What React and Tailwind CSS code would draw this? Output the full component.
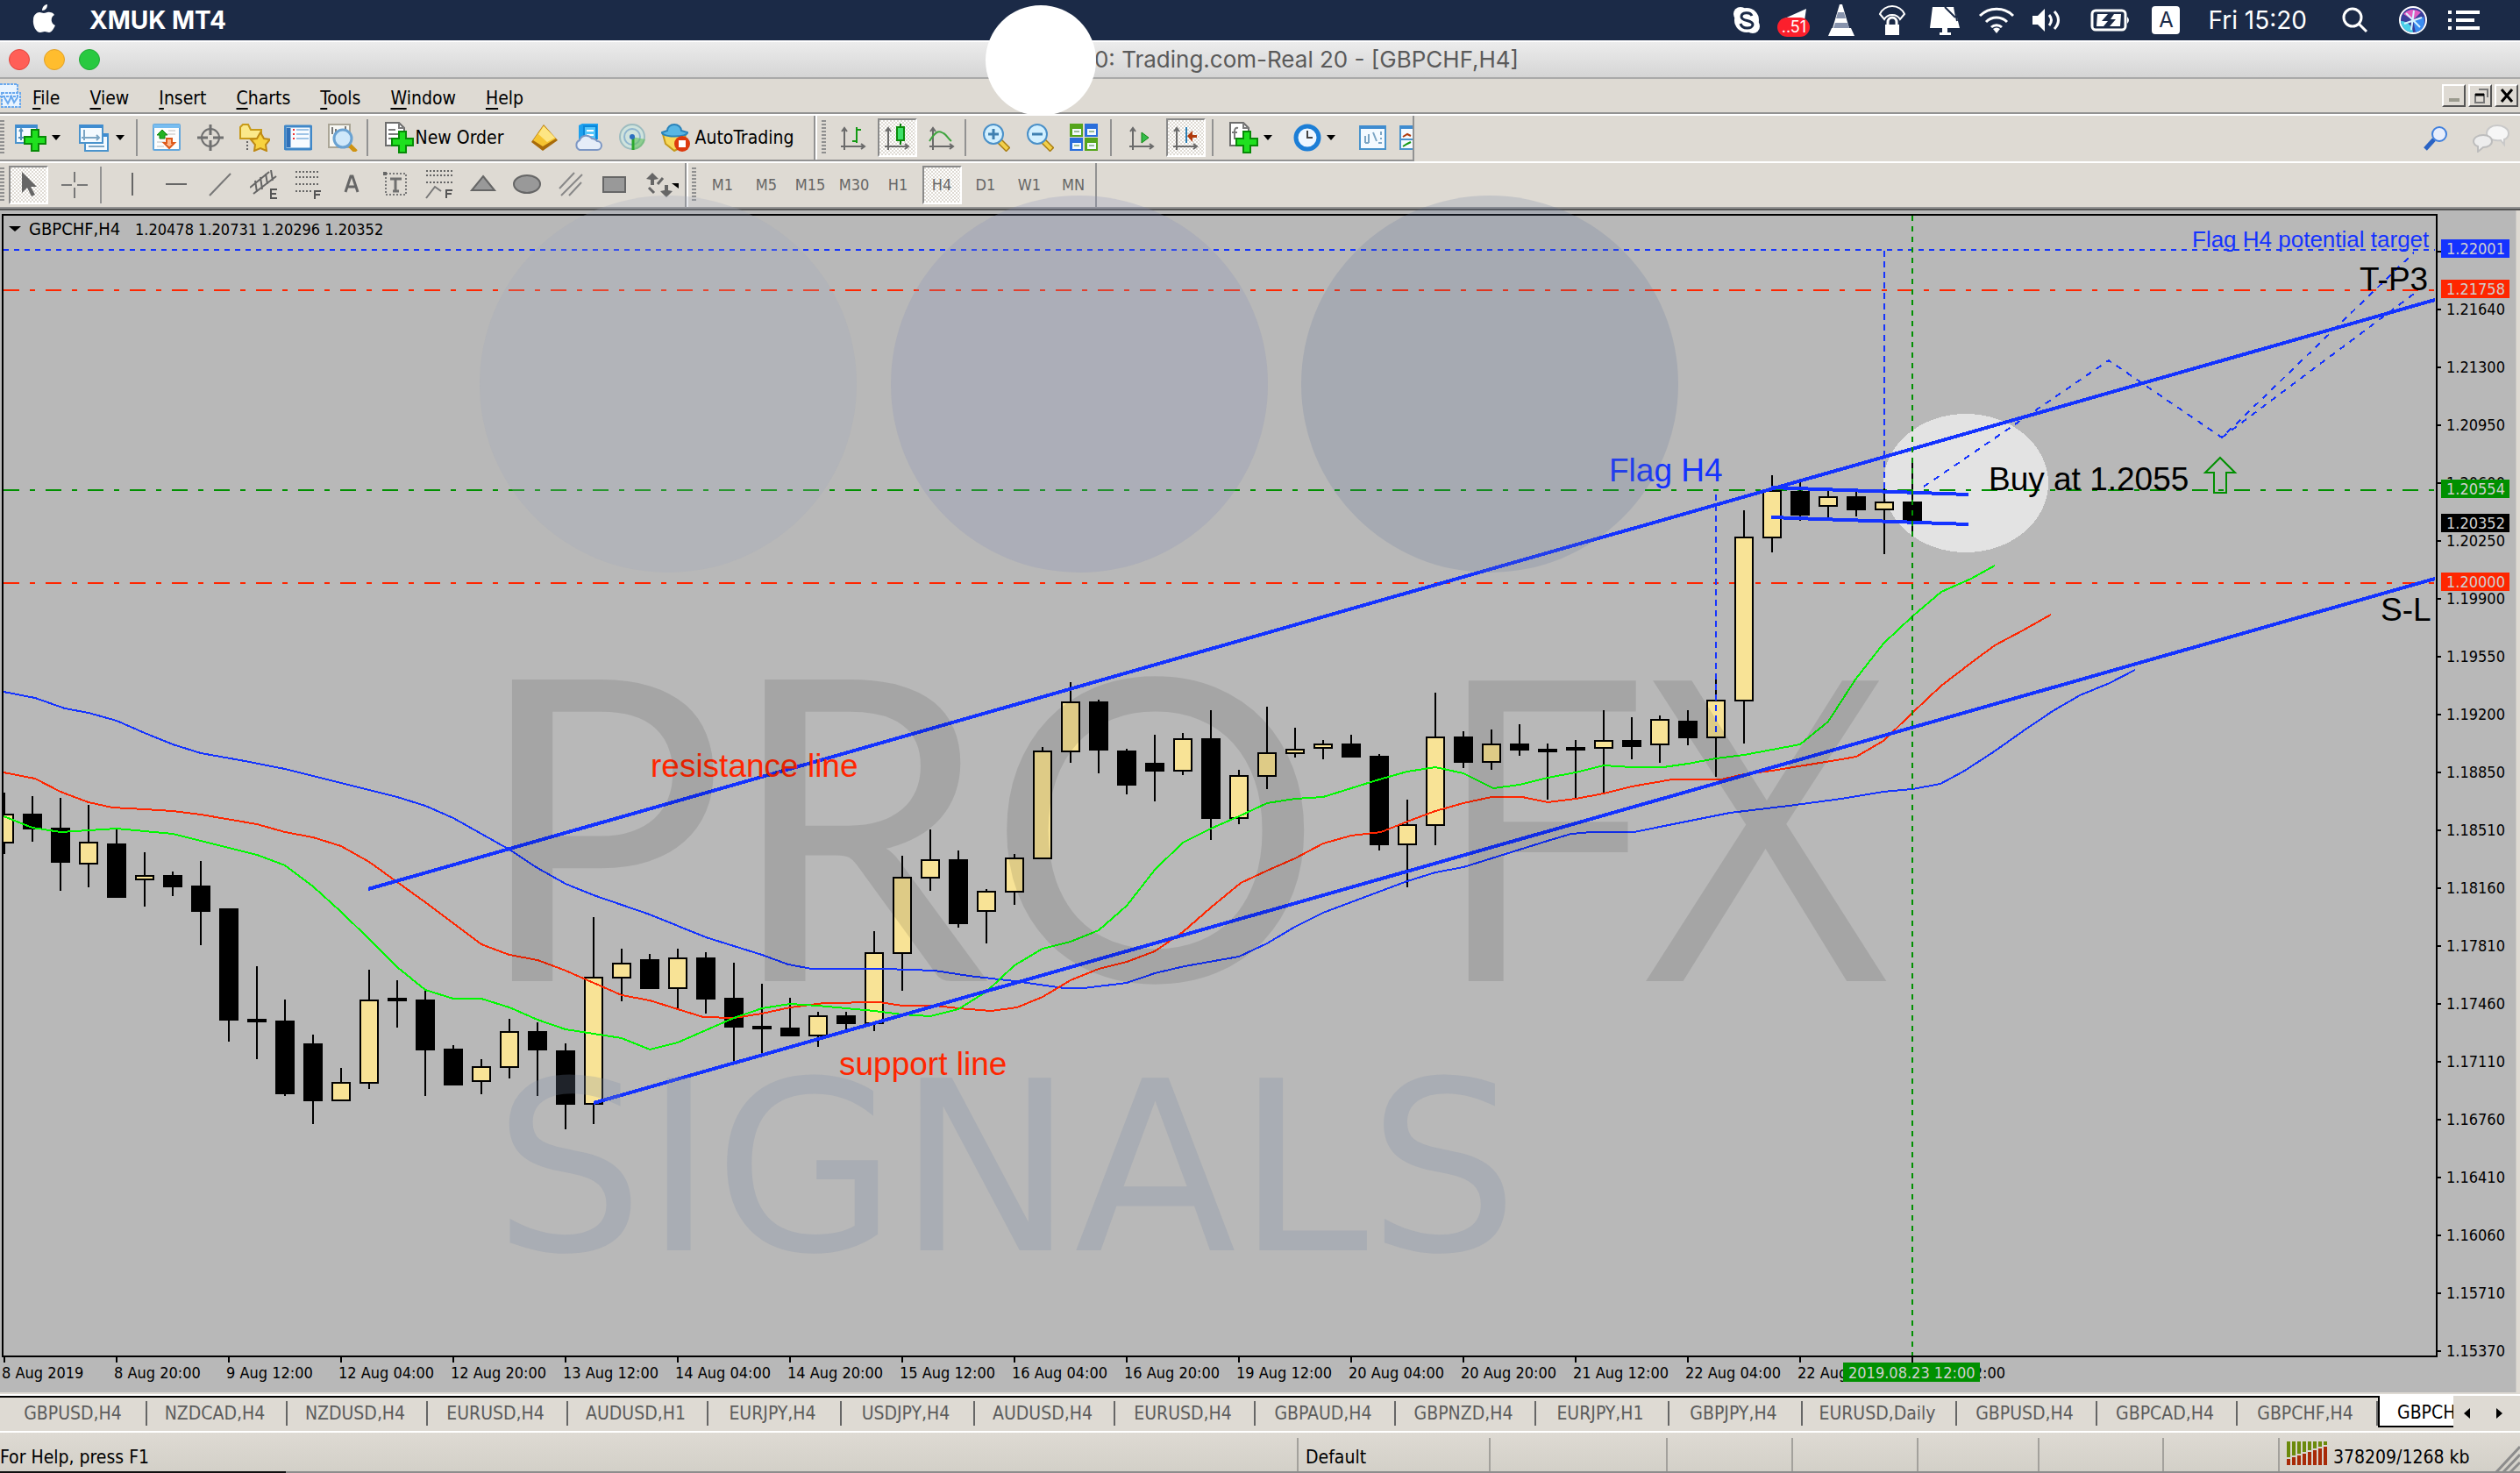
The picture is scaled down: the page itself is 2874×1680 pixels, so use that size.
const UP = "up";
const DOWN = "down";

// [high, top, bottom, low, direction]
const candles = [
    [904, 928, 962, 974, UP],
    [908, 928, 946, 960, DOWN],
    [910, 944, 984, 1016, DOWN],
    [918, 960, 986, 1012, UP],
    [946, 962, 1024, 1024, DOWN],
    [972, 998, 1004, 1034, UP],
    [994, 998, 1012, 1022, DOWN],
    [982, 1010, 1040, 1078, DOWN],
    [1036, 1036, 1164, 1188, DOWN],
    [1102, 1162, 1166, 1208, DOWN],
    [1140, 1164, 1248, 1250, DOWN],
    [1180, 1190, 1256, 1282, DOWN],
    [1218, 1234, 1256, 1256, UP],
    [1106, 1140, 1236, 1242, UP],
    [1118, 1138, 1142, 1172, DOWN],
    [1130, 1140, 1198, 1250, DOWN],
    [1192, 1196, 1238, 1238, DOWN],
    [1208, 1216, 1234, 1248, UP],
    [1162, 1176, 1218, 1230, UP],
    [1166, 1176, 1198, 1250, DOWN],
    [1190, 1198, 1260, 1288, DOWN],
    [1046, 1114, 1260, 1282, UP],
    [1082, 1098, 1116, 1142, UP],
    [1088, 1094, 1128, 1128, DOWN],
    [1082, 1092, 1128, 1150, UP],
    [1086, 1092, 1140, 1156, DOWN],
    [1098, 1138, 1172, 1210, DOWN],
    [1122, 1170, 1174, 1202, DOWN],
    [1138, 1172, 1182, 1182, DOWN],
    [1154, 1158, 1182, 1194, UP],
    [1154, 1158, 1168, 1174, DOWN],
    [1062, 1086, 1168, 1176, UP],
    [976, 1000, 1088, 1130, UP],
    [946, 980, 1002, 1016, UP],
    [970, 980, 1054, 1058, DOWN],
    [1014, 1016, 1040, 1076, UP],
    [974, 978, 1018, 1032, UP],
    [852, 856, 980, 980, UP],
    [778, 800, 858, 870, UP],
    [798, 800, 856, 882, DOWN],
    [854, 856, 896, 906, DOWN],
    [838, 870, 880, 914, DOWN],
    [836, 842, 880, 884, UP],
    [810, 842, 934, 958, DOWN],
    [878, 884, 934, 940, UP],
    [806, 858, 886, 900, UP],
    [830, 854, 860, 864, UP],
    [844, 848, 854, 866, UP],
    [838, 848, 864, 864, DOWN],
    [860, 862, 964, 970, DOWN],
    [912, 940, 964, 1012, UP],
    [790, 840, 942, 964, UP],
    [834, 840, 870, 876, DOWN],
    [832, 848, 870, 878, UP],
    [826, 848, 856, 862, DOWN],
    [848, 854, 858, 912, DOWN],
    [844, 852, 856, 912, DOWN],
    [810, 844, 854, 904, UP],
    [818, 844, 852, 866, DOWN],
    [816, 820, 850, 870, UP],
    [810, 822, 842, 850, DOWN],
    [772, 798, 842, 886, UP],
    [582, 612, 800, 848, UP],
    [542, 559, 614, 630, UP],
    [550, 560, 588, 594, DOWN],
    [556, 566, 578, 590, UP],
    [561, 566, 582, 589, DOWN],
    [557, 572, 582, 632, UP],
    [528, 572, 594, 607, DOWN],
];

const fastAverage =
    "4,931 37,944 69,949 101,947 133,945 165,948 197,951 229,959 261,967 293,975 325,987 357,1011 389,1040 421,1071 453,1103 485,1129 517,1139 549,1139 581,1149 613,1163 645,1174 677,1179 709,1184 741,1197 773,1189 805,1175 837,1161 869,1150 901,1145 933,1147 965,1150 997,1153 1029,1157 1061,1159 1093,1151 1125,1131 1157,1101 1189,1082 1221,1074 1253,1061 1285,1033 1317,992 1349,961 1381,945 1413,931 1445,916 1477,911 1509,909 1541,899 1573,889 1605,880 1637,875 1669,882 1703,899 1733,895 1765,887 1797,881 1829,873 1861,875 1897,875 1925,871 1957,865 1989,861 2021,855 2053,849 2085,823 2116,775 2148,734 2181,703 2214,675 2248,660 2275,645";
const midAverage =
    "4,881 40,888 69,903 101,915 128,921 165,923 197,925 229,929 293,940 325,949 357,955 389,965 421,983 453,1006 485,1029 517,1053 549,1077 581,1089 613,1095 645,1107 677,1121 709,1135 741,1141 773,1151 802,1160 837,1161 869,1156 901,1149 940,1144 1003,1143 1029,1147 1067,1147 1093,1150 1130,1153 1160,1149 1189,1137 1221,1118 1253,1105 1285,1097 1317,1085 1349,1063 1381,1035 1415,1007 1445,993 1477,979 1509,962 1541,953 1575,949 1605,937 1637,925 1669,916 1701,909 1736,909 1765,915 1797,911 1829,905 1861,897 1907,889 1963,889 1989,883 2021,879 2100,866 2117,863 2148,845 2181,813 2214,782 2248,756 2275,736 2307,719 2339,701";
const slowAverage =
    "4,789 40,796 74,808 101,813 133,822 165,836 197,849 229,859 274,867 325,877 389,893 453,909 485,919 517,933 549,951 581,969 613,990 645,1008 677,1021 709,1032 741,1043 773,1056 805,1069 837,1079 869,1089 899,1100 926,1105 1008,1105 1066,1107 1105,1113 1157,1119 1214,1127 1236,1127 1285,1121 1317,1110 1351,1102 1413,1091 1445,1076 1477,1057 1509,1041 1541,1029 1573,1017 1605,1005 1637,995 1669,989 1701,979 1733,969 1765,959 1792,951 1815,949 1864,949 1893,943 1973,927 2040,919 2100,911 2148,903 2181,900 2213,894 2239,880 2273,858 2307,834 2341,811 2372,793 2406,779 2435,764";

const prices = [
    "1.21640", "1.21300", "1.20950", "1.20600", "1.20250", "1.19900", "1.19550", "1.19200", "1.18850", "1.18510",
    "1.18160", "1.17810", "1.17460", "1.17110", "1.16760", "1.16410", "1.16060", "1.15710", "1.15370",
];

const priceTags = [
    { y: 273, value: "1.22001", className: "fill-[#1433ff]" },
    { y: 319, value: "1.21758", className: "fill-[#ff2600]" },
    { y: 547, value: "1.20554", className: "fill-[#009000]" },
    { y: 586, value: "1.20352", className: "fill-black" },
    { y: 653, value: "1.20000", className: "fill-[#ff2600]" },
];

const dates = [
    "8 Aug 2019", "8 Aug 20:00", "9 Aug 12:00", "12 Aug 04:00", "12 Aug 20:00", "13 Aug 12:00", "14 Aug 04:00",
    "14 Aug 20:00", "15 Aug 12:00", "16 Aug 04:00", "16 Aug 20:00", "19 Aug 12:00", "20 Aug 04:00", "20 Aug 20:00",
    "21 Aug 12:00", "22 Aug 04:00", "22 Aug 20:00", "23 Aug 12:00",
];

const chartTabs = [
    ["GBPUSD,H4", "w-[168px] pl-1"],
    ["NZDCAD,H4", "w-[160px]"],
    ["NZDUSD,H4", "w-[160px]"],
    ["EURUSD,H4", "w-[160px]"],
    ["AUDUSD,H1", "w-[160px]"],
    ["EURJPY,H4", "w-[152px]"],
    ["USDJPY,H4", "w-[152px]"],
    ["AUDUSD,H4", "w-[160px]"],
    ["EURUSD,H4", "w-[160px]"],
    ["GBPAUD,H4", "w-[160px]"],
    ["GBPNZD,H4", "w-[160px]"],
    ["EURJPY,H1", "w-[152px]"],
    ["GBPJPY,H4", "w-[152px]"],
    ["EURUSD,Daily", "w-[176px]"],
    ["GBPUSD,H4", "w-[160px]"],
    ["GBPCAD,H4", "w-[160px]"],
    ["GBPCHF,H4", "w-[160px]"],
];

const Svg = ({ w = 32, h = 32, children, className = "" }) => (
    <svg width={w} height={h} viewBox={`0 0 ${w} ${h}`} className={`shrink-0 ${className}`} fill="none" aria-hidden="true">
        {children}
    </svg>
);

const Plus = ({ x = 10, y = 7 }) => (
    <path
        d={`M${x + 8} ${y}h8v8h8v8h-8v8h-8v-8h-8v-8h8z`}
        fill="#1fe01f"
        stroke="#078a07"
        strokeWidth="2"
    />
);

const Axes = () => <path d="M6 6v24M2 26h26M3 9l3-4 3 4M25 23l4 3-4 3" stroke="#6b6b6b" strokeWidth="2" />;

const Lens = ({ minus }) => (
    <Svg>
        <path d="M20 20l10 10" stroke="#a87c10" strokeWidth="7" />
        <path d="M20 20l9 9" stroke="#f2cf4a" strokeWidth="4" />
        <circle cx="13" cy="12" r="11" fill="#d2f0ff" stroke="#4a90c8" strokeWidth="2" />
        <path d={minus ? "M7 12h12" : "M7 12h12M13 6v12"} stroke="#3f80b0" strokeWidth="3" />
    </Svg>
);

const Page = ({ x, y, w, h }) => (
    <g>
        <rect x={x} y={y} width={w} height={h} fill="#f4faff" stroke="#4a93cc" strokeWidth="2" />
        <path d={`M${x} ${y + 1}h${w}`} stroke="#3f8cd0" strokeWidth="4" />
    </g>
);

const Document = () => (
    <g>
        <path d="M2 1h15l6 6v20H2z" fill="#fff" stroke="#6d6d6d" strokeWidth="2" />
        <path d="M17 1v6h6M5 9h8M5 14h13M5 19h10" stroke="#7b7b7b" strokeWidth="2" />
    </g>
);

const icons = {
    newChart: (
        <Svg w={36}>
            <Page x={1} y={2} w={24} h={20} />
            <path d="M7 7v12M4 16h10M5 9l2-3 2 3" stroke="#5590b8" strokeWidth="2" />
            <Plus x={11} y={7} />
        </Svg>
    ),
    profiles: (
        <Svg w={36}>
            <Page x={7} y={12} w={26} h={19} />
            <Page x={1} y={2} w={26} h={20} />
            <path d="M6 7v12M3 16h20M20 13l3 3-3 3M11 26h18" stroke="#7ba5c4" strokeWidth="2" />
        </Svg>
    ),
    marketWatch: (
        <Svg>
            <rect x="1" y="1" width="30" height="29" rx="1" fill="#fdfdfd" stroke="#64a7dc" strokeWidth="2" />
            <path d="M1 3h30" stroke="#78bdf0" strokeWidth="4" />
            <path d="M15 12h11M5 21h9M18 8h8M5 26h8" stroke="#ddd" strokeWidth="2" />
            <path d="M11 7l6 6h-3v4H8v-4H5z" fill="#23b223" stroke="#118811" />
            <path d="M19 28l-6-6h3v-5h6v5h3z" fill="#ffb78c" stroke="#de5a1c" strokeWidth="2" />
        </Svg>
    ),
    crosshair: (
        <Svg>
            <circle cx="16" cy="16" r="10" stroke="#707070" strokeWidth="2" />
            <path d="M16 1v12M16 19v12M1 16h12M19 16h12" stroke="#707070" strokeWidth="3" />
        </Svg>
    ),
    navigator: (
        <Svg w={36}>
            <path d="M2 4l3-3h6l3 6h12v10H2z" fill="#fbe98b" stroke="#c89b1a" strokeWidth="2" />
            <path d="M10 20v12" stroke="#666" strokeWidth="2" strokeDasharray="2 2" />
            <path d="M25 10l4 7 7 1-5 6 1 7-7-3-7 3 1-7-5-6 7-1z" fill="#f8d33f" stroke="#bf8a14" strokeWidth="2" />
        </Svg>
    ),
    terminal: (
        <Svg>
            <rect x="1" y="3" width="30" height="26" rx="1" fill="#f7fbff" stroke="#3f87c8" strokeWidth="3" />
            <path d="M5 5v22" stroke="#2f70b8" strokeWidth="5" />
            <path d="M11 6v2M11 11v2M11 16v2" stroke="#e33" strokeWidth="2" />
            <path d="M14 7h14M14 12h14M14 17h14" stroke="#9fc4e6" strokeWidth="2" />
        </Svg>
    ),
    tester: (
        <Svg w={36}>
            <rect x="1" y="1" width="24" height="26" fill="#f8f8f4" stroke="#aaa596" strokeWidth="2" />
            <path d="M5 4v8M9 6v7M20 3v7" stroke="#777" strokeWidth="2" />
            <path d="M23 23l9 9" stroke="#cf9312" strokeWidth="5" />
            <circle cx="17" cy="17" r="10" fill="#cfe8fa" stroke="#6aa2d2" strokeWidth="3" />
        </Svg>
    ),
    newOrder: (
        <Svg w={34} h={36}>
            <Document />
            <Plus x={9} y={11} />
        </Svg>
    ),
    gold: (
        <Svg>
            <path d="M15 1L1 21l13 10L31 19z" fill="#a86b09" />
            <path d="M15 2L3 19l11 7 15-9z" fill="#f5c431" />
            <path d="M15 3L9 12l10 9 9-5z" fill="#fde583" />
        </Svg>
    ),
    cloud: (
        <Svg>
            <path d="M5 2l4-2h18v18H5z" fill="#1da0ee" />
            <path d="M11 3h14v15H11z" fill="#55c6fb" stroke="#0a86d8" strokeWidth="2" />
            <path d="M14 8h8M14 13h8" stroke="#fff" strokeWidth="2" />
            <path d="M6 30a6 6 0 010-11 8 8 0 0114-2 7 7 0 016 3 5 5 0 010 10z" fill="#e6edf8" stroke="#7d97c4" strokeWidth="2" />
        </Svg>
    ),
    signals: (
        <Svg>
            <circle cx="16" cy="15" r="14" fill="#cfe3dd" stroke="#9dbcc0" strokeWidth="2" />
            <circle cx="16" cy="15" r="9" stroke="#8fb5cf" strokeWidth="2" />
            <path d="M16 15l2 15a15 15 0 0013-12z" fill="#62c05c" opacity=".6" />
            <path d="M17 15v15" stroke="#2ba82b" strokeWidth="3" />
            <circle cx="16" cy="15" r="3" fill="#2c6fc0" />
        </Svg>
    ),
    autoTrading: (
        <Svg w={34}>
            <path d="M3 12h26l-3 14-10 5-10-8z" fill="#f7d85a" stroke="#c59a1c" strokeWidth="2" />
            <path d="M8 8a8 7 0 0116 0l7 2c1 6-30 6-29 0z" fill="#58b6e4" stroke="#2a83ba" strokeWidth="2" />
            <circle cx="25" cy="23" r="9" fill="#dd3a0e" />
            <path d="M21 19h8v8h-8z" fill="#fff" />
        </Svg>
    ),
    bars: (
        <Svg>
            <Axes />
            <path d="M20 4v18M15 20h5M20 7h5" stroke="#149a14" strokeWidth="2" />
        </Svg>
    ),
    candles: (
        <Svg>
            <Axes />
            <path d="M20 0v24" stroke="#0a7c0a" strokeWidth="2" />
            <path d="M16 4h8v15h-8z" fill="#3fe06a" stroke="#0a8c0a" strokeWidth="2" />
        </Svg>
    ),
    line: (
        <Svg>
            <Axes />
            <path d="M2 20C12 4 15 10 18 11s5 6 9 9" stroke="#3ea43e" strokeWidth="2" />
        </Svg>
    ),
    tile: (
        <Svg>
            <path d="M0 0h15v15H0zM17 16h15v15H17z" fill="#55a51c" />
            <path d="M17 0h15v15H17zM0 16h15v15H0z" fill="#2a6edb" />
            <path d="M3 6h10v7H3zM20 6h10v7H20zM3 22h10v7H3zM20 22h10v7H20z" fill="#f3faff" />
            <path d="M5 9h6M22 9h6M5 25h6M22 25h6" stroke="#9abb9a" strokeWidth="2" />
        </Svg>
    ),
    autoScroll: (
        <Svg>
            <Axes />
            <path d="M16 10l8 6-8 6z" fill="#34bb4a" stroke="#118811" />
        </Svg>
    ),
    shift: (
        <Svg>
            <Axes />
            <path d="M17 4v18" stroke="#2a7fb5" strokeWidth="2" />
            <path d="M18 14l6-6v5h5v3h-5v5z" fill="#b03a0c" />
        </Svg>
    ),
    indicators: (
        <Svg w={34} h={36}>
            <path d="M2 1h15l6 6v20H2z" fill="#fff" stroke="#6d6d6d" strokeWidth="2" />
            <path d="M17 1v6h6M11 7q-4-1-4 4v9M4 12h6" stroke="#7b7b7b" strokeWidth="2" />
            <Plus x={9} y={11} />
        </Svg>
    ),
    clock: (
        <Svg>
            <circle cx="16" cy="16" r="13" fill="#eef7ff" stroke="#1c7ed6" strokeWidth="5" />
            <path d="M16 8v8h6" stroke="#444" strokeWidth="2" />
        </Svg>
    ),
    template: (
        <Svg>
            <Page x={1} y={3} w={29} h={26} />
            <path d="M7 22v-8M11 22V12M7 22h4M16 10l4 10M25 9v4M25 16v2M22 22h4" stroke="#7ba5c4" strokeWidth="2" />
        </Svg>
    ),
    cutWindow: (
        <Svg w={15}>
            <Page x={1} y={3} w={20} h={26} />
            <path d="M4 15l5-3 4 2" stroke="#b03a0c" strokeWidth="2" />
            <path d="M2 18h13" stroke="#4a93cc" strokeWidth="2" />
            <path d="M4 26l5-3 4-2" stroke="#149a14" strokeWidth="2" />
        </Svg>
    ),
};

const drawIcons = [
    ["Vertical line", <path key="a" d="M16 3v26" stroke="#666" strokeWidth="2" />],
    ["Horizontal line", <path key="a" d="M4 16h24" stroke="#666" strokeWidth="2" />],
    ["Trendline", <path key="a" d="M4 29L28 4" stroke="#777" strokeWidth="2" />],
    [
        "Channel",
        <g key="a">
            <path d="M0 20L22 2M4 27L30 7M6 12l2 13M12 8l2 14M18 4l2 12M24 0l2 12" stroke="#666" strokeWidth="2" />
            <path d="M31 22h-7v10h7M24 27h6" stroke="#555" strokeWidth="2" />
        </g>,
    ],
    [
        "Fibonacci",
        <g key="a">
            <path d="M2 2h27M2 8h27M2 16h27M2 24h20" stroke="#666" strokeWidth="2" strokeDasharray="2 2" />
            <path d="M24 33V24h7M24 28h6" stroke="#555" strokeWidth="2" />
        </g>,
    ],
    ["Text", <path key="a" d="M9 25l6-18h2l6 18M12 19h8" stroke="#666" strokeWidth="3" />],
    [
        "Text label",
        <g key="a">
            <path d="M5 4h23v24H5z" stroke="#777" strokeWidth="2" strokeDasharray="2 2" />
            <path d="M2 2h4v4H2z" fill="#666" />
            <path d="M10 10h13M16 10v14M13 24h7" stroke="#707070" strokeWidth="3" />
        </g>,
    ],
    [
        "Expansion",
        <g key="a">
            <path d="M1 1h30M1 6h30M1 14h30" stroke="#666" strokeWidth="2" strokeDasharray="2 2" />
            <path d="M1 32l10-13 7 5" stroke="#777" strokeWidth="2" />
            <path d="M24 32V23h7M24 27h6" stroke="#555" strokeWidth="2" />
        </g>,
    ],
    ["Triangle", <path key="a" d="M16 7l13 16H3z" fill="#999" stroke="#666" strokeWidth="2" />],
    ["Ellipse", <ellipse key="a" cx="16" cy="16" rx="15" ry="10" fill="#999" stroke="#666" strokeWidth="2" />],
    ["Lines", <path key="a" d="M3 21L20 3M5 29L29 5M14 29l14-15" stroke="#888" strokeWidth="2" />],
    ["Rectangle", <path key="a" d="M3 8h25v17H3z" fill="#999" stroke="#666" strokeWidth="2" />],
];

const timeframes = ["M1", "M5", "M15", "M30", "H1", "H4", "D1", "W1", "MN"];

const Grip = () => (
    <span className="h-10 w-[5px] shrink-0 bg-[repeating-linear-gradient(#8f8f8f_0_2px,transparent_2px_4px)]" />
);

const Divider = () => <span className="h-[42px] w-[2px] shrink-0 bg-[#929292]" />;

const Caret = () => <span className="h-0 w-0 border-x-[5px] border-t-[6px] border-x-transparent border-t-black" />;

const pressed =
    "h-[44px] border-2 border-t-[#8a8a8a] border-l-[#8a8a8a] border-r-white border-b-white bg-[repeating-conic-gradient(#fff_0_25%,#dedad3_0_50%)] bg-[length:4px_4px]";

const ToolButton = ({ label, width = "w-[50px]", active = false, children }) => (
    <span className={`flex h-full shrink-0 items-center justify-center ${width}`}>
        <button
            type="button"
            aria-label={label}
            aria-pressed={active}
            className={`flex items-center justify-center gap-[6px] ${active ? `w-[45px] ${pressed}` : ""}`}
        >
            {children}
        </button>
    </span>
);

const MacBar = () => (
    <header className="flex h-[46px] items-center bg-[#1b2a47] pr-[46px] pl-9 font-['Inter',sans-serif] text-white">
        <Svg w={28} h={34} className="-mt-1">
            <path d="M18 1c0 4-2 7-6 7 0-4 3-7 6-7z" fill="#fff" />
            <path d="M14 11c2 0 4-2 7-1 2 0 4 1 5 3-5 3-4 10 1 12-2 4-4 8-7 8-2 0-3-1-5-1s-3 1-5 1C5 33 1 25 2 18c0-5 4-8 7-8 2 0 3 1 5 1z" fill="#fff" />
        </Svg>
        <span className="ml-[38px] text-[28px] leading-8 font-bold">XMUK MT4</span>
        <div className="ml-auto flex items-center">
            <Svg className="mr-[19px]">
                <circle cx="16" cy="16" r="14" fill="#fff" />
                <circle cx="9" cy="9" r="8" fill="#fff" />
                <circle cx="23" cy="23" r="8" fill="#fff" />
                <path d="M22 11c-2-5-12-4-12 1 0 6 13 3 13 9 0 5-12 6-14-1" stroke="#1b2a47" strokeWidth="3" />
            </Svg>
            <span className="relative mr-5 flex h-9 w-[37px] justify-center">
                <Svg>
                    <path d="M1 18L30 5l-3 20-9-4z" fill="#fff" />
                </Svg>
                <span className="absolute top-[15px] left-0 h-[22px] w-[37px] rounded-full bg-[#fc1f2c] text-center text-[18px] leading-[22px]">
                    ..51
                </span>
            </span>
            <Svg h={38} className="mr-[26px]">
                <path d="M14 1h3l8 27H6z" fill="#fff" />
                <path d="M12 10h7l2 7H10zM9 22h14l2 6H7z" fill="#8793ad" />
                <path d="M5 28h22l4 9H1z" fill="#fff" />
            </Svg>
            <Svg h={34} className="mr-[26px]">
                <path d="M2 10a15 14 0 0128 0l-5 6a10 9 0 00-18 0z" stroke="#fff" strokeWidth="2" />
                <path d="M11 24v-5a5 5 0 0110 0v5" stroke="#fff" strokeWidth="3" />
                <path d="M8 22h16v12H8z" fill="#fff" />
            </Svg>
            <Svg w={36} h={34} className="mr-5">
                <path d="M4 2h25l6 24H1z" fill="#fff" />
                <path d="M18 2l12 12M29 2l3 16" stroke="#1b2a47" strokeWidth="2" />
                <path d="M15 26h6v5h4v3H12v-3h3z" fill="#fff" />
            </Svg>
            <Svg w={42} h={30} className="mr-5">
                <path d="M2 10a27 27 0 0138 0M9 17a17 17 0 0124 0M15 23a9 9 0 0112 0" stroke="#fff" strokeWidth="3" />
                <path d="M17 25l4 5 4-5q-4-3-8 0z" fill="#fff" />
            </Svg>
            <Svg w={36} h={30} className="mr-[30px]">
                <path d="M0 10h6l8-8v26l-8-8H0z" fill="#fff" />
                <path d="M19 9q5 6 0 12M25 5q9 10 0 20" stroke="#fff" strokeWidth="3" />
            </Svg>
            <Svg w={46} h={28} className="mr-6">
                <rect x="2" y="3" width="38" height="22" rx="4" stroke="#fff" strokeWidth="3" />
                <path d="M8 7h12l-7 8h7l-5 6H7zM34 21H22l7-8h-6l4-6h8zM42 10q4 4 0 8z" fill="#fff" />
            </Svg>
            <span className="flex h-8 w-8 items-center justify-center rounded bg-white text-[24px] leading-8 text-[#1b2a47]">A</span>
            <span className="ml-8 text-[28px] leading-8">Fri 15:20</span>
            <Svg w={31} h={30} className="ml-[40px]">
                <circle cx="12" cy="12" r="10" stroke="#fff" strokeWidth="3" />
                <path d="M19 19l9 9" stroke="#fff" strokeWidth="3" />
            </Svg>
            <Svg className="ml-[34px]">
                <circle cx="16" cy="16" r="15" fill="#3a3f9a" stroke="#fff" strokeWidth="2" />
                <path d="M2 17a14 14 0 0114 13 14 14 0 01-14-13z" fill="#4ad0e8" />
                <path d="M5 9Q14 0 25 7L16 16z" fill="#e05ac0" />
                <path d="M28 12q4 14-9 18l-3-14z" fill="#3a8cf0" />
                <path d="M8 8l16 16M6 20l20-7M17 5l-3 22" stroke="#d8f4ff" strokeWidth="2" />
            </Svg>
            <Svg w={36} h={24} className="ml-6">
                <path d="M0 3h4M9 3h27M0 12h4M9 12h21M0 21h4M9 21h27" stroke="#fff" strokeWidth="4" />
            </Svg>
        </div>
    </header>
);

const TitleBar = () => (
    <div className="flex h-[44px] items-center border-t-2 border-b-2 border-t-white border-b-[#a9a9a9] bg-gradient-to-b from-[#ececec] to-[#d5d5d5] pl-[10px]">
        <div className="flex gap-4">
            <button type="button" aria-label="Close" className="h-6 w-6 rounded-full border border-[#e2453d] bg-[#ff5f57]" />
            <button type="button" aria-label="Minimise" className="h-6 w-6 rounded-full border border-[#e0a028] bg-[#ffbd2e]" />
            <button type="button" aria-label="Zoom" className="h-6 w-6 rounded-full border border-[#1fa834] bg-[#28c940]" />
        </div>
        <div className="flex flex-1 justify-center pr-[114px]">
            <h1 className="relative pl-[106px] font-['Inter',sans-serif] text-[26px] leading-8 text-[#5a5a5a]">
                <span className="absolute -top-[46px] -left-[18px] h-[126px] w-[126px] rounded-full bg-white" />
                0: Trading.com-Real 20 - [GBPCHF,H4]
            </h1>
        </div>
    </div>
);

const menu = ["File", "View", "Insert", "Charts", "Tools", "Window", "Help"];
const frameButton =
    "flex h-[26px] w-[27px] items-end justify-center border-2 border-t-white border-l-white border-r-[#555] border-b-[#555] bg-[#dedad3]";

const MenuBar = () => (
    <nav className="flex h-[38px] items-center">
        <Svg w={26} h={30} className="mr-[11px]">
            <path d="M-4 2h24v14H-4zM2 12h21v16H2z" fill="#e9f4ff" stroke="#6aa9ee" strokeWidth="2" strokeDasharray="3 1" />
            <path d="M5 17l4 7 4-8 3 7 4-6" stroke="#6aa9ee" strokeWidth="2" />
        </Svg>
        <div className="flex gap-[34px] pt-[6px]">
            {menu.map((item) => (
                <button key={item} type="button" className="leading-6">
                    <span className="underline decoration-2 underline-offset-4">{item[0]}</span>
                    {item.slice(1)}
                </button>
            ))}
        </div>
        <div className="mr-[2px] ml-auto flex gap-[3px]">
            <button type="button" aria-label="Minimise chart" className={frameButton}>
                <span className="mb-1 h-1 w-3 bg-[#9b9b8f]" />
            </button>
            <button type="button" aria-label="Restore chart" className={frameButton}>
                <Svg w={20} h={22}>
                    <path d="M8 4h10v9M4 10h10v9H4z" stroke="#777" strokeWidth="2" />
                    <path d="M4 10h10" stroke="#000" strokeWidth="3" />
                </Svg>
            </button>
            <button type="button" aria-label="Close chart" className={frameButton}>
                <Svg w={20} h={22}>
                    <path d="M4 4l12 14M16 4L4 18" stroke="#000" strokeWidth="3" />
                </Svg>
            </button>
        </div>
    </nav>
);

const MainToolbar = () => (
    <div className="flex h-[54px] items-center border-t-2 border-white">
        <div className="flex h-full items-center border-r-2 border-b-2 border-[#929292]">
            <Grip />
            <ToolButton label="New chart" width="w-[75px]">{icons.newChart}<Caret /></ToolButton>
            <ToolButton label="Profiles" width="w-[75px] pr-1">{icons.profiles}<Caret /></ToolButton>
            <Divider />
            <span className="w-2" />
            <ToolButton label="Market Watch">{icons.marketWatch}</ToolButton>
            <ToolButton label="Data Window">{icons.crosshair}</ToolButton>
            <ToolButton label="Navigator">{icons.navigator}</ToolButton>
            <ToolButton label="Terminal">{icons.terminal}</ToolButton>
            <ToolButton label="Strategy Tester" width="w-[50px] pl-1">{icons.tester}</ToolButton>
            <span className="w-[3px]" />
            <Divider />
            <ToolButton label="New Order" width="w-[176px] pr-1">
                {icons.newOrder}
                <span className="-ml-1 leading-6 whitespace-nowrap">New Order</span>
            </ToolButton>
            <ToolButton label="MetaEditor">{icons.gold}</ToolButton>
            <ToolButton label="Market">{icons.cloud}</ToolButton>
            <ToolButton label="Signals">{icons.signals}</ToolButton>
            <ToolButton label="AutoTrading" width="w-[182px] pr-4">
                {icons.autoTrading}
                <span className="leading-6">AutoTrading</span>
            </ToolButton>
            <span className="h-full w-[2px] bg-[#929292]" />
            <span className="mr-[5px] h-full w-[2px] bg-white" />
            <Grip />
            <span className="w-[6px]" />
            <ToolButton label="Bar chart">{icons.bars}</ToolButton>
            <ToolButton label="Candlesticks" active>{icons.candles}</ToolButton>
            <ToolButton label="Line chart" width="w-[52px]">{icons.line}</ToolButton>
            <Divider />
            <span className="w-[9px]" />
            <ToolButton label="Zoom in"><Lens /></ToolButton>
            <ToolButton label="Zoom out"><Lens minus /></ToolButton>
            <ToolButton label="Tile windows">{icons.tile}</ToolButton>
            <span className="w-[5px]" />
            <Divider />
            <span className="w-[9px]" />
            <ToolButton label="Auto scroll">{icons.autoScroll}</ToolButton>
            <ToolButton label="Chart shift" active>{icons.shift}</ToolButton>
            <span className="w-[5px]" />
            <Divider />
            <ToolButton label="Indicators" width="w-[83px]">{icons.indicators}<Caret /></ToolButton>
            <ToolButton label="Periods" width="w-[64px]">{icons.clock}<Caret /></ToolButton>
            <ToolButton label="Templates" width="w-[65px] pl-1">{icons.template}</ToolButton>
            <ToolButton label="Window" width="w-[15px]">{icons.cutWindow}</ToolButton>
        </div>
        <div className="mr-3 ml-auto flex items-center gap-7">
            <button type="button" aria-label="Search">
                <Svg w={28} h={28}>
                    <path d="M12 15L2 26" stroke="#2a63c4" strokeWidth="5" />
                    <circle cx="18" cy="9" r="8" fill="#e8eefc" stroke="#3f7fdd" strokeWidth="2" />
                </Svg>
            </button>
            <button type="button" aria-label="Chat">
                <Svg w={42} h={32}>
                    <path d="M28 1c7 0 13 4 13 9 0 3-2 6-5 7v6l-4-5c-9 1-16-2-16-8 0-5 5-9 12-9z" fill="#f6f6f6" stroke="#c9c9c9" strokeWidth="2" />
                    <path d="M12 12c6 0 10 3 10 7s-4 7-10 7l-6 5v-6c-3-1-5-3-5-6 0-4 5-7 11-7z" fill="#ededed" stroke="#bdbdbd" strokeWidth="2" />
                </Svg>
            </button>
        </div>
    </div>
);

const DrawToolbar = () => (
    <div className="flex h-[54px] items-center border-t-2 border-b-2 border-t-white border-b-[#929292] text-[18px] text-[#666]">
        <Grip />
        <ToolButton label="Cursor" width="w-[55px]" active>
            <Svg>
                <path d="M8 1v24l6-6 5 10 4-2-5-9h7z" fill="#666" />
            </Svg>
        </ToolButton>
        <ToolButton label="Crosshair">
            <Svg>
                <path d="M16 1v12M16 19v12M1 16h12M19 16h12" stroke="#777" strokeWidth="2" />
            </Svg>
        </ToolButton>
        <span className="w-1" />
        <Divider />
        <span className="w-[10px]" />
        {drawIcons.map(([label, shape]) => (
            <ToolButton key={label} label={label}>
                <Svg h={34}>{shape}</Svg>
            </ToolButton>
        ))}
        <ToolButton label="Arrows" width="w-[55px]">
            <Svg w={40}>
                <path d="M10 2l7 7-5 1v6H8v-6l-5-1zM26 30l-7-7 5-1v-6h4v6l5 1z" fill="#666" />
                <path d="M6 19l6 6M22 8l-6 7" stroke="#666" strokeWidth="3" />
                <path d="M32 14h8v6z" fill="#000" />
            </Svg>
        </ToolButton>
        <span className="h-full w-[2px] bg-[#929292]" />
        <span className="mr-1 h-full w-[2px] bg-white" />
        <Grip />
        <span className="w-[5px]" />
        {timeframes.map((frame) => (
            <ToolButton key={frame} label={frame} active={frame === "H4"}>
                <span className="leading-6">{frame}</span>
            </ToolButton>
        ))}
        <span className="h-full w-[2px] bg-[#929292]" />
    </div>
);

const Candle = ({ index, data }) => {
    const [high, top, bottom, low, direction] = data;
    const x = 5 + index * 32;
    return (
        <g>
            <path d={`M${x} ${high}V${low}`} className="stroke-black stroke-2" />
            <rect
                x={x - 10}
                y={top + 1}
                width="20"
                height={Math.max(bottom - top - 2, 1)}
                className={direction === UP ? "fill-[#f8e396] stroke-black stroke-2" : "fill-black stroke-black stroke-2"}
            />
        </g>
    );
};

const Watermark = () => (
    <g>
        <circle cx="762" cy="438" r="215" className="fill-[#a0a8bc]/25" />
        <circle cx="1231" cy="438" r="215" className="fill-[#8890b8]/25" />
        <circle cx="1699" cy="438" r="215" className="fill-[#5f7399]/20" />
        <g className="fill-black/10 text-[480px]">
            <text x="540" y="1119" className="font-['Lato',sans-serif]">PRO</text>
            <text x="1628" y="1119" className="font-['Open_Sans',sans-serif]">FX</text>
        </g>
        <text x="563" y="1426" className="fill-[#7c8aa8]/25 font-['DejaVu_Sans',sans-serif] text-[270px]">SIGNALS</text>
    </g>
);

const Chart = () => (
    <svg viewBox="0 240 2874 1348" className="relative block w-full overflow-visible bg-[#b8b8b8]" fill="none" role="img" aria-label="GBPCHF,H4 chart">
        <path d="M2872 240V1588" className="stroke-[#dedad3] stroke-[5px]" />
        <clipPath id="plot">
            <path d="M4 246H2777V1546H4z" />
        </clipPath>
        <g clipPath="url(#plot)" shapeRendering="crispEdges">
            <ellipse cx="2242" cy="551" rx="94" ry="79" className="fill-[#e3e3e3]" />
            <path d="M4 285H2777" className="stroke-[#1433ff] stroke-2" strokeDasharray="6 6" />
            <path d="M4 331H2777M4 665H2777" className="stroke-[#ff2600] stroke-2" strokeDasharray="18 12 6 12" />
            <path d="M4 559H2777" className="stroke-[#009000] stroke-2" strokeDasharray="18 12 6 12" />
            {candles.map((data, index) => (
                <Candle key={index} index={index} data={data} />
            ))}
            <g className="stroke-2">
                <polyline points={slowAverage} className="stroke-[#1433ff]" />
                <polyline points={midAverage} className="stroke-[#ff2600]" />
                <polyline points={fastAverage} className="stroke-[#00f900]" />
            </g>
            <path d="M420 1014L2777 342M677 1258L2777 660M2020 556L2245 564M2020 590L2245 598" className="stroke-[#1433ff] stroke-4" />
            <path d="M2149 286V557M1957 564V840" className="stroke-[#1433ff] stroke-2" strokeDasharray="7 5" />
            <path d="M2194 555L2405 411L2534 499L2753 288M2534 499L2753 335" className="stroke-[#1433ff] stroke-2" strokeDasharray="7 7" />
            <path d="M2181 246V1546" className="stroke-[#009000] stroke-2" strokeDasharray="6 6" />
        </g>
        <path d="M2532 522l17 17h-10v23h-14v-23h-10z" className="stroke-[#009000] stroke-2" />
        <g className="font-['Liberation_Sans',sans-serif] text-[37px]">
            <g className="fill-[#ff2600]">
                <text x="742" y="886">resistance line</text>
                <text x="957" y="1226">support line</text>
            </g>
            <g className="fill-[#1433ff]">
                <text x="1835" y="549">Flag H4</text>
                <text x="2500" y="282" className="text-[26px]">Flag H4 potential target</text>
            </g>
            <g className="fill-black">
                <text x="2268" y="559">Buy at 1.2055</text>
                <text x="2691" y="331">T-P3</text>
                <text x="2715" y="708">S-L</text>
            </g>
        </g>
        <path d="M3 1547V245H2779V1547z" className="stroke-black stroke-2" />
        <g className="fill-black text-[18px]">
            <path d="M10 258h14l-7 6z" />
            <text x="33" y="268" className="text-[20px]">GBPCHF,H4</text>
            <text x="154" y="268">1.20478 1.20731 1.20296 1.20352</text>
            <path d="M2780 287h4" className="stroke-black stroke-2" />
            {prices.map((price, index) => (
                <g key={price}>
                    <path d={`M2780 ${353 + index * 66}h4`} className="stroke-black stroke-2" />
                    <text x="2790" y={359 + index * 66}>{price}</text>
                </g>
            ))}
            {dates.map((date, index) => (
                <g key={date}>
                    <path d={`M${5 + index * 128} 1548v6`} className="stroke-black stroke-2" />
                    <text x={index * 128 + 2} y="1572">{date}</text>
                </g>
            ))}
        </g>
        <g className="text-[18px]">
            {priceTags.map((tag) => (
                <g key={tag.value}>
                    <rect x="2784" y={tag.y} width="78" height="21" className={tag.className} />
                    <text x="2790" y={tag.y + 17} className="fill-[#cfcfcf]">{tag.value}</text>
                </g>
            ))}
            <rect x="2102" y="1554" width="156" height="22" className="fill-[#009000]" />
            <text x="2108" y="1572" className="fill-[#cfcfcf]">2019.08.23 12:00</text>
        </g>
        <Watermark />
    </svg>
);

const TabStrip = () => (
    <div className="flex h-[46px] items-stretch border-t-2 border-b-2 border-t-[#dedad3] border-b-white">
        <div className="flex min-w-0 flex-1 overflow-hidden border-t-2 border-white" role="tablist">
            {chartTabs.map(([name, width], index) => (
                <button
                    key={index}
                    type="button"
                    role="tab"
                    aria-selected="false"
                    className={`flex shrink-0 justify-center border-t-2 border-black text-[#5c5c5c] ${width}`}
                >
                    <span className="mt-1 flex h-7 flex-1 items-center justify-center border-r-2 border-[#666] pr-1 leading-6">{name}</span>
                </button>
            ))}
            <button type="button" role="tab" aria-selected="true" className="mb-1 flex w-[160px] shrink-0 items-center border-b-2 border-l-2 border-black bg-white pt-1 pl-5 leading-6">
                GBPCHF,H4
            </button>
        </div>
        <div className="flex w-[76px] items-center justify-between border-t-2 border-white pr-5 pl-3">
            <button type="button" aria-label="Scroll tabs left" className="h-0 w-0 border-y-[6px] border-r-[7px] border-y-transparent border-r-black" />
            <button type="button" aria-label="Scroll tabs right" className="h-0 w-0 border-y-[6px] border-l-[7px] border-y-transparent border-l-black" />
        </div>
    </div>
);

const cells = ["w-[219px]", "w-[202px]", "w-[143px]", "w-[143px]", "w-[138px]", "w-[142px]", "w-[132px]"];

const StatusBar = () => (
    <footer className="flex h-[44px] items-stretch bg-gradient-to-b from-[#dedad3] to-[#d3d0c8] pt-[6px]">
        <span className="flex-1 pt-[10px] leading-6">For Help, press F1</span>
        {cells.map((width, index) => (
            <span key={index} className={`shrink-0 border-l-2 border-[#a3a19c] pt-[10px] pl-2 leading-6 ${width}`}>
                {index === 0 ? "Default" : ""}
            </span>
        ))}
        <span className="flex w-[276px] shrink-0 gap-[7px] border-l-2 border-[#a3a19c] pt-1 pl-2">
            <Svg w={46} h={27}>
                {[0, 1, 2, 3, 4, 5, 6, 7].map((bar) => (
                    <g key={bar}>
                        <path d={`M${bar * 6 + 2} 0V${18 - bar * 2}`} stroke="#6b8a0c" strokeWidth="4" />
                        <path d={`M${bar * 6 + 2} ${20 - bar * 2}V27`} stroke="#a82a08" strokeWidth="4" />
                    </g>
                ))}
            </Svg>
            <span className="pt-[6px] leading-6 whitespace-nowrap">378209/1268 kb</span>
            <Svg w={30} h={32} className="mt-1 ml-auto">
                <path d="M2 32L30 2M10 32L30 11M18 32L30 20" stroke="#8c8c8c" strokeWidth="3" />
            </Svg>
        </span>
    </footer>
);

export default function App() {
    return (
        <main className="min-h-screen overflow-hidden bg-[#dedad3] font-['DejaVu_Sans_Condensed','DejaVu_Sans',sans-serif] text-[21px] text-black">
            <MacBar />
            <TitleBar />
            <MenuBar />
            <div className="h-[2px] bg-[#929292]" />
            <MainToolbar />
            <DrawToolbar />
            <div className="h-[2px] bg-[#555]" />
            <Chart />
            <TabStrip />
            <StatusBar />
            <div className="flex h-[2px] bg-[#8d8d8d]">
                <span className="w-[326px] bg-[#111]" />
            </div>
        </main>
    );
}
